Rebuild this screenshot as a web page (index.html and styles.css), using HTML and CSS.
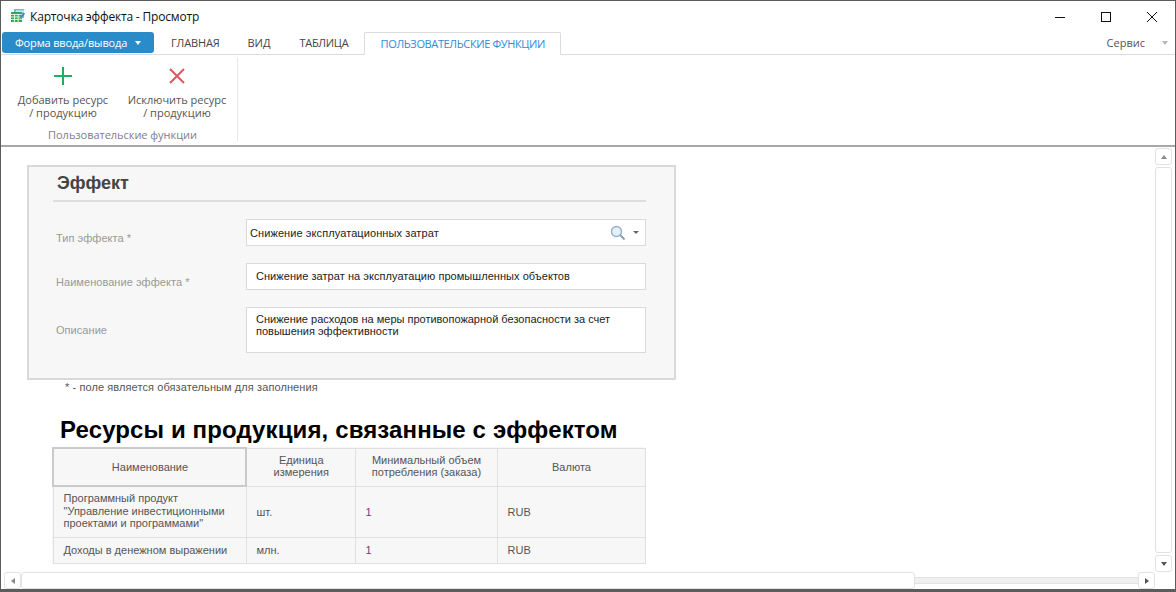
FILE: index.html
```html
<!DOCTYPE html>
<html lang="ru">
<head>
<meta charset="utf-8">
<title>Карточка эффекта - Просмотр</title>
<link rel="stylesheet" href="styles.css">
</head>
<body>
<div class="window">
  <header class="titlebar">
    <svg class="app-icon" width="16" height="16" viewBox="0 0 16 16">
      <rect x="4" y="0" width="10" height="9" fill="#7db7e8"/>
      <rect x="6" y="1.5" width="8" height="2" fill="#cfe5f7"/>
      <rect x="1" y="3" width="11" height="10" fill="#2fa85e"/>
      <path d="M1 5.5h11M1 8h11M1 10.5h11M4.5 5v8M8.2 5v8" stroke="#dff3e5" stroke-width="1"/>
      <path d="M9.5 8.5l4-5 1.6 1.3-4 5z" fill="#3a8fd0"/>
      <path d="M9.5 8.5l-1.3 3.3 2.9-2z" fill="#e8a93c"/>
    </svg>
    <span class="title">Карточка эффекта - Просмотр</span>
    <div class="winctl">
      <svg width="12" height="12" viewBox="0 0 12 12"><path d="M1 6.5h10" stroke="#111" stroke-width="1"/></svg>
      <svg width="12" height="12" viewBox="0 0 12 12"><rect x="1.5" y="1.5" width="9" height="9" fill="none" stroke="#111" stroke-width="1"/></svg>
      <svg width="12" height="12" viewBox="0 0 12 12"><path d="M1 1l10 10M11 1L1 11" stroke="#111" stroke-width="1"/></svg>
    </div>
  </header>

  <nav class="tabbar">
    <div class="form-btn">Форма ввода/вывода<span class="caret caret-white"></span></div>
    <span class="tab tab-main">ГЛАВНАЯ</span>
    <span class="tab tab-view">ВИД</span>
    <span class="tab tab-table">ТАБЛИЦА</span>
    <span class="tab tab-active">ПОЛЬЗОВАТЕЛЬСКИЕ ФУНКЦИИ</span>
    <span class="service">Сервис</span>
    <span class="caret caret-gray"></span>
  </nav>

  <section class="ribbon">
    <div class="group">
      <div class="group-btns">
        <div class="rbtn rbtn-add">
          <svg width="20" height="20" viewBox="0 0 20 20"><path d="M10 1v18M1 10h18" stroke="#21ad5e" stroke-width="2"/></svg>
          <span>Добавить ресурс<br>/ продукцию</span>
        </div>
        <div class="rbtn rbtn-del">
          <svg width="20" height="20" viewBox="0 0 20 20"><path d="M3 3l14 14M17 3L3 17" stroke="#e2575c" stroke-width="2"/></svg>
          <span>Исключить ресурс<br>/ продукцию</span>
        </div>
      </div>
      <div class="group-name">Пользовательские функции</div>
    </div>
  </section>

  <div class="body">
    <main class="page">
      <section class="card">
        <h2 class="card-title">Эффект</h2>
        <div class="row row-first">
          <label class="lbl">Тип эффекта *</label>
          <div class="field field-select">
            <span class="select-text">Снижение эксплуатационных затрат</span>
            <svg class="search" width="16" height="16" viewBox="0 0 16 16">
              <circle cx="6.5" cy="6.5" r="5" fill="#e6f0f8" stroke="#8fb2cf" stroke-width="1.4"/>
              <path d="M10.2 10.2l4.3 4.3" stroke="#7f9db5" stroke-width="1.8"/>
            </svg>
            <span class="caret caret-small"></span>
          </div>
        </div>
        <div class="row">
          <label class="lbl">Наименование эффекта *</label>
          <div class="field field-text">Снижение затрат на эксплуатацию промышленных объектов</div>
        </div>
        <div class="row">
          <label class="lbl lbl-area">Описание</label>
          <div class="field field-area">Снижение расходов на меры противопожарной безопасности за счет<br>повышения эффективности</div>
        </div>
      </section>
      <p class="note">* - поле является обязательным для заполнения</p>
      <h1 class="res-title">Ресурсы и продукция, связанные с эффектом</h1>
      <table class="grid">
        <colgroup><col class="c1"><col class="c2"><col class="c3"><col class="c4"></colgroup>
        <thead>
          <tr>
            <th class="th-focus">Наименование</th>
            <th class="th-two">Единица<br>измерения</th>
            <th class="th-two">Минимальный объем<br>потребления (заказа)</th>
            <th>Валюта</th>
          </tr>
        </thead>
        <tbody>
          <tr class="tr-tall">
            <td class="td-name">Программный продукт<br>"Управление инвестиционными<br>проектами и программами"</td>
            <td>шт.</td><td class="num">1</td><td>RUB</td>
          </tr>
          <tr class="tr-short">
            <td>Доходы в денежном выражении</td>
            <td>млн.</td><td class="num">1</td><td>RUB</td>
          </tr>
        </tbody>
      </table>
    </main>
    <aside class="vscroll">
      <div class="sbtn"><span class="arrow arrow-up"></span></div>
      <div class="vthumb"></div>
      <div class="sbtn"><span class="arrow arrow-down"></span></div>
    </aside>
  </div>

  <div class="hscroll">
    <div class="sbtn"><span class="arrow arrow-left"></span></div>
    <div class="hthumb"></div>
    <div class="htrack"></div>
    <div class="sbtn"><span class="arrow arrow-right"></span></div>
  </div>
</div>
</body>
</html>
```
FILE: styles.css
```css
* { box-sizing: border-box; }
html, body { margin: 0; padding: 0; height: 100%; background: #fff; overflow: hidden; }
.window {
  width: 1176px; height: 592px;
  border: 1px solid #5c5c5c; border-bottom-width: 3px;
  display: flex; flex-direction: column;
  font-family: "Open Sans", "Noto Sans", sans-serif;
  background: #fff;
}
.titlebar { height: 31px; flex: none; display: flex; align-items: center; padding-left: 9px; }
.app-icon { flex: none; margin-top: 1px; }
.title { margin-left: 4px; font-size: 12px; color: #111; letter-spacing: -0.18px; }
.winctl { margin-left: auto; display: flex; gap: 34px; padding-right: 17px; }

.tabbar { height: 23px; flex: none; display: flex; align-items: flex-start; border-bottom: 1px solid #dcdcdc; font-size: 11px; color: #444; padding: 0 7px 0 1px; }
.form-btn { width: 152px; height: 21px; background: #2a8bc9; border-radius: 3px; color: #fff; display: flex; align-items: center; padding-left: 13px; font-size: 11px; letter-spacing: -0.16px; }
.caret { display: inline-block; width: 0; height: 0; border-left: 3.5px solid transparent; border-right: 3.5px solid transparent; border-top: 4px solid #fff; }
.caret-white { margin-left: 8px; }
.caret-gray { border-top-color: #b8b8b8; margin: 9px 0 0 17px; }
.caret-small { border-left-width: 3.5px; border-right-width: 3.5px; border-top: 3px solid #666; margin-left: 7px; }
.tab { height: 22px; line-height: 22px; white-space: nowrap; }
.tab-main { margin-left: 17px; letter-spacing: -0.15px; }
.tab-view { margin-left: 28px; }
.tab-table { margin-left: 29px; letter-spacing: -0.3px; }
.tab-active { margin-left: 16px; width: 197px; height: 23px; text-align: center; color: #2f8bd6; background: #fff; border: 1px solid #dcdcdc; border-bottom-color: #fff; border-radius: 2px 2px 0 0; letter-spacing: -0.37px; }
.service { margin-left: auto; height: 22px; line-height: 22px; font-size: 11px; color: #555; }

.ribbon { height: 92px; flex: none; border-bottom: 2px solid #a8a8a8; padding-top: 2px; display: flex; }
.group { width: 237px; height: 84px; border-right: 1px solid #e8e8e8; display: flex; flex-direction: column; }
.group-btns { display: flex; height: 68px; flex: none; }
.rbtn { display: flex; flex-direction: column; align-items: center; text-align: center; font-size: 11px; line-height: 13px; color: #555; padding-top: 9px; }
.rbtn svg { margin-bottom: 7px; }
.rbtn-add { width: 124px; }
.rbtn-del { width: 104px; }
.group-name { font-size: 11px; text-align: center; color: #7d7d90; line-height: 12px; margin-top: 4px; padding-left: 7px; letter-spacing: -0.04px; }

.body { flex: 1; display: flex; min-height: 0; }
.page { flex: 1; min-width: 0; padding: 18px 0 0 26px; font-family: "Liberation Sans", Arial, sans-serif; overflow: hidden; }
.card { width: 649px; height: 215px; border: 2px solid #d9d9d9; background: #f7f7f7; padding: 0 28px 0 24px; }
.card-title { margin: 0; height: 35px; border-bottom: 2px solid #dedede; font-size: 18px; font-weight: bold; color: #444; line-height: 32px; padding-left: 4px; }
.row { display: flex; align-items: center; margin-top: 17px; }
.lbl { width: 193px; flex: none; padding-left: 3px; font-size: 11px; color: #999; position: relative; top: 5px; letter-spacing: 0.05px; }
.lbl-area { top: 0; }
.field { width: 400px; background: #fff; border: 1px solid #dadada; font-size: 11px; color: #222; }
.field-select { height: 27px; display: flex; align-items: center; padding-left: 3px; }
.select-text { flex: 1; letter-spacing: 0.09px; }
.search { flex: none; }
.caret-small { margin-right: 6px; }
.field-text { height: 27px; line-height: 25px; padding-left: 9px; letter-spacing: 0.05px; }
.field-area { height: 46px; line-height: 12px; padding: 5px 0 0 9px; }
.note { margin: 1px 0 0 38px; font-size: 11px; line-height: 13px; color: #555; letter-spacing: 0.09px; }
.res-title { margin: 21px 0 0 33px; font-size: 24px; line-height: 30px; font-weight: bold; color: #000; white-space: nowrap; letter-spacing: 0.12px; }
.grid { margin: 2px 0 0 25px; width: 592px; table-layout: fixed; border-collapse: collapse; background: #f7f7f7; font-size: 11px; color: #555; }
.c1 { width: 193px; } .c2 { width: 109px; } .c3 { width: 142px; } .c4 { width: 148px; }
.grid th, .grid td { border: 1px solid #e0e0e0; line-height: 12.5px; padding: 0 9px 0 10px; }
.grid th { height: 38px; font-weight: normal; text-align: center; }
.grid .th-two { padding-bottom: 2px; }
.grid td { text-align: left; vertical-align: middle; }
.grid .th-focus { border: 2px solid #cacaca; }
.tr-tall td { height: 51px; padding-top: 2px; }
.tr-tall .td-name { padding-top: 0; padding-bottom: 2px; }
.tr-short td { height: 26px; }
.grid .num { color: #6f3f6f; }

.vscroll { width: 20px; flex: none; display: flex; flex-direction: column; align-items: center; padding: 1px 3px 0 0; gap: 2px; }
.sbtn { width: 17px; height: 17px; flex: none; background: #fff; border: 1px solid #e2e2e2; border-radius: 3px; display: flex; align-items: center; justify-content: center; }
.vthumb { flex: 1; width: 17px; background: #fff; border: 1px solid #e2e2e2; border-radius: 3px; }
.arrow { display: block; width: 0; height: 0; }
.arrow-up { border-left: 3.5px solid transparent; border-right: 3.5px solid transparent; border-bottom: 4px solid #8a8a8a; }
.arrow-down { border-left: 3.5px solid transparent; border-right: 3.5px solid transparent; border-top: 4px solid #555; }
.arrow-left { border-top: 3.5px solid transparent; border-bottom: 3.5px solid transparent; border-right: 4px solid #8a8a8a; }
.arrow-right { border-top: 3.5px solid transparent; border-bottom: 3.5px solid transparent; border-left: 4px solid #555; }

.hscroll { height: 17px; flex: none; display: flex; align-items: center; padding: 0 20px 0 3px; }
.hthumb { width: 894px; height: 17px; flex: none; background: #fff; border: 1px solid #e2e2e2; border-radius: 3px; }
.htrack { flex: 1; height: 7px; background: #f0f0f0; border: 1px solid #e2e2e2; border-width: 1px 0; }
```
